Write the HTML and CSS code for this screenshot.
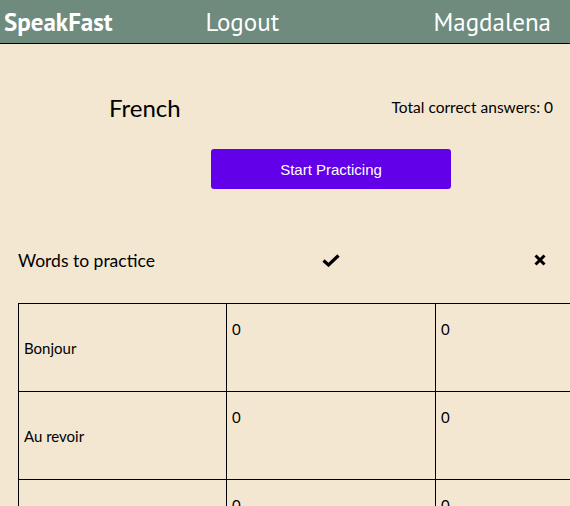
FILE: index.html
```html
<!DOCTYPE html>
<html>
<head>
<meta charset="utf-8">
<link rel="stylesheet" href="styles.css">
</head>
<body>
<header class="topbar">
  <span class="brand">SpeakFast</span>
  <span class="logout">Logout</span>
  <span class="user">Magdalena</span>
</header>
<main class="page">
  <div class="lang-row">
    <h1 class="lang">French</h1>
    <span class="total">Total correct answers: 0</span>
  </div>
  <div class="btn-row"><button class="start">Start Practicing</button></div>
  <div class="words-head">
    <span class="wh-title">Words to practice</span>
    <span class="wh-icon"><svg width="18" height="13" viewBox="0 0 18 13"><path d="M1.5 6.5 L6.5 11 L16.5 1.5" fill="none" stroke="#000" stroke-width="3.2" stroke-linejoin="miter"/></svg></span>
    <span class="wh-icon"><svg width="12" height="12" viewBox="0 0 12 12"><path d="M1.5 1.5 L10.5 10.5 M10.5 1.5 L1.5 10.5" stroke="#000" stroke-width="3"/></svg></span>
  </div>
  <table class="words">
    <tr><td class="word">Bonjour</td><td class="num">0</td><td class="num">0</td></tr>
    <tr><td class="word">Au revoir</td><td class="num">0</td><td class="num">0</td></tr>
    <tr><td class="word">Merci</td><td class="num">0</td><td class="num">0</td></tr>
  </table>
</main>
</body>
</html>
```
FILE: styles.css
```css
html, body {
  margin: 0;
  padding: 0;
  background: #f3e7d2;
  overflow: hidden;
}
body {
  font-family: Lato, "Open Sans", sans-serif;
  color: #000;
}
.topbar {
  height: 43px;
  background: #6e8b7e;
  border-bottom: 1px solid #000;
  display: flex;
  align-items: center;
  font-family: "PT Sans", "Open Sans", sans-serif;
  color: #fff;
  font-size: 25px;
  padding: 0 19px 0 4px;
}
.brand { font-weight: bold; }
.logout { margin-left: 93px; }
.user { margin-left: auto; }
.page {
  padding: 0 0 0 18px;
}
.lang-row {
  display: flex;
  align-items: center;
  height: 60px;
  margin-top: 33px;
}
.lang {
  margin: 0 0 0 91px;
  font-size: 24px;
  font-weight: normal;
}
.total {
  margin-left: auto;
  margin-right: 17px;
  font-size: 15.5px;
}
.btn-row {
  display: flex;
  margin-top: 12px;
}
.start {
  margin-left: 193px;
  width: 240px;
  height: 40px;
  border: none;
  border-radius: 3px;
  background: #6200ea;
  color: #fff;
  font-family: "Liberation Sans", Arial, sans-serif;
  font-size: 15px;
}
.words-head {
  display: grid;
  grid-template-columns: 208px 209px 209px;
  align-items: center;
  margin-top: 52px;
  height: 38px;
  width: 626px;
}
.wh-title { font-size: 17.5px; }
.wh-icon { display: flex; justify-content: center; }
.words {
  margin-top: 24px;
  border-collapse: collapse;
  width: 627px;
  table-layout: fixed;
}
.words td {
  border: 1px solid #000;
  padding: 0 5px;
  font-size: 15px;
}
.words td.word { width: 197px; vertical-align: middle; }
.words td.num { vertical-align: top; padding-top: 16px; height: 71px; }
```
